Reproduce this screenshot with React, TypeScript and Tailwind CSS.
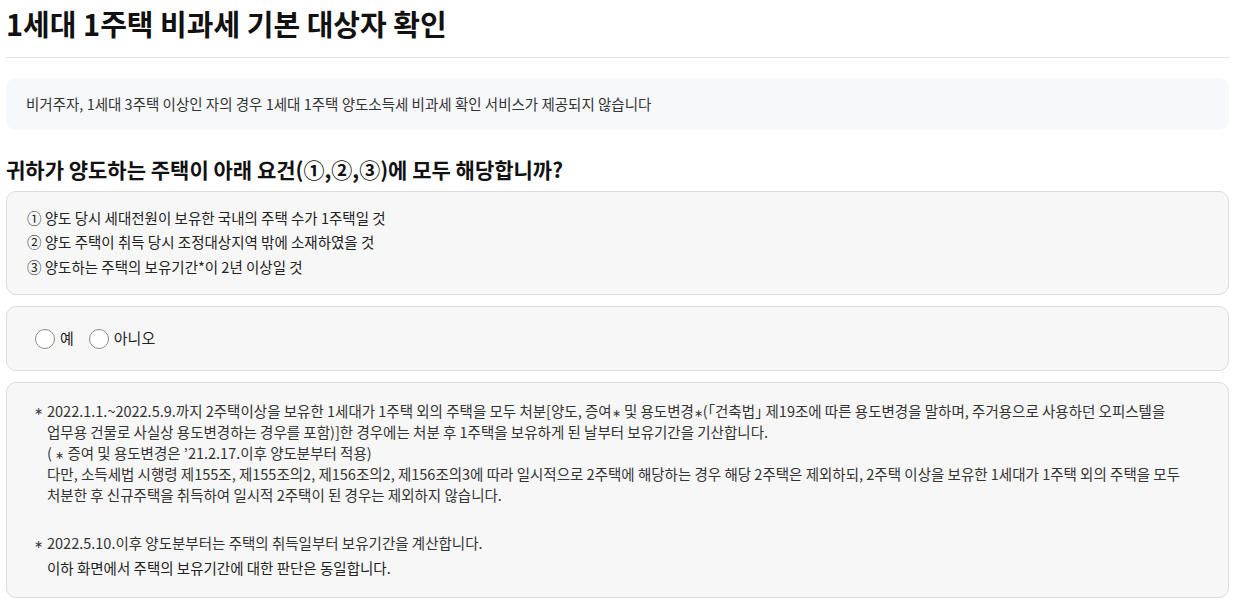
const Radio = ({ label }: { label: string }) => (
  <label className="flex items-center gap-[5px] cursor-pointer">
    <span className="w-[20px] h-[20px] rounded-full border border-[#8a8a8a] bg-white shrink-0" />
    <span className="text-[15px] text-[#222]">{label}</span>
  </label>
);

const Star = () => <span className="text-[11px] leading-none">∗</span>;

export default function App() {
  return (
    <main
      className="min-h-screen bg-white px-[6px] pr-[8px] text-[#333] break-keep"
      style={{ fontFamily: '"Noto Sans CJK KR", "Noto Sans", sans-serif' }}
    >
      <h1 className="pt-[3px] pb-[14px] text-[29px] leading-[40px] font-bold text-[#111]">
        1세대 1주택 비과세 기본 대상자 확인
      </h1>
      <hr className="border-0 border-t border-[#e3e3e3]" />

      <div className="mt-[20px] h-[52px] rounded-[10px] bg-[#f7f8fc] px-[20px] flex items-center">
        <p className="text-[14.5px] text-[#333]">
          비거주자, 1세대 3주택 이상인 자의 경우 1세대 1주택 양도소득세 비과세 확인 서비스가 제공되지 않습니다
        </p>
      </div>

      <h2 className="mt-[24px] text-[21px] leading-[30px] font-bold text-[#111]">
        귀하가 양도하는 주택이 아래 요건(①,②,③)에 모두 해당합니까?
      </h2>

      {/* requirements */}
      <div className="mt-[7px] rounded-[10px] border border-[#dcdcdc] bg-[#f7f7f7] px-[20px] pt-[14px] pb-[14px] text-[14.5px] text-[#222]">
        <p className="leading-[24px]">① 양도 당시 세대전원이 보유한 국내의 주택 수가 1주택일 것</p>
        <p className="leading-[24px]">② 양도 주택이 취득 당시 조정대상지역 밖에 소재하였을 것</p>
        <p className="leading-[26px]">③ 양도하는 주택의 보유기간*이 2년 이상일 것</p>
      </div>

      {/* answer */}
      <div className="mt-[11px] h-[65px] rounded-[10px] border border-[#dcdcdc] bg-[#f7f7f7] px-[28px] flex items-center gap-[15px]">
        <Radio label="예" />
        <Radio label="아니오" />
      </div>

      {/* notes */}
      <div className="mt-[11px] rounded-[10px] border border-[#dcdcdc] bg-[#f7f7f7] pl-[27px] pr-[30px] pt-[17px] pb-[16px] text-[14.5px] text-[#333] leading-[21px]">
        <div className="flex">
          <span className="w-[13px] shrink-0 text-[11px]">∗</span>
          <div>
            <p>
              2022.1.1.~2022.5.9.까지 2주택이상을 보유한 1세대가 1주택 외의 주택을 모두 처분[양도, 증여<Star /> 및 용도변경<Star />(｢건축법｣ 제19조에 따른 용도변경을 말하며, 주거용으로 사용하던 오피스텔을 업무용 건물로 사실상 용도변경하는 경우를 포함)]한 경우에는 처분 후 1주택을 보유하게 된 날부터 보유기간을 기산합니다.
            </p>
            <p>( <Star /> 증여 및 용도변경은 ’21.2.17.이후 양도분부터 적용)</p>
            <p>
              다만, 소득세법 시행령 제155조, 제155조의2, 제156조의2, 제156조의3에 따라 일시적으로 2주택에 해당하는 경우 해당 2주택은 제외하되, 2주택 이상을 보유한 1세대가 1주택 외의 주택을 모두 처분한 후 신규주택을 취득하여 일시적 2주택이 된 경우는 제외하지 않습니다.
            </p>
          </div>
        </div>
        <div className="flex mt-[26px]">
          <span className="w-[13px] shrink-0 text-[11px] leading-[24px]">∗</span>
          <div>
            <p className="leading-[24px]">2022.5.10.이후 양도분부터는 주택의 취득일부터 보유기간을 계산합니다.</p>
            <p className="leading-[26px] text-[#222]">이하 화면에서 주택의 보유기간에 대한 판단은 동일합니다.</p>
          </div>
        </div>
      </div>
    </main>
  );
}
